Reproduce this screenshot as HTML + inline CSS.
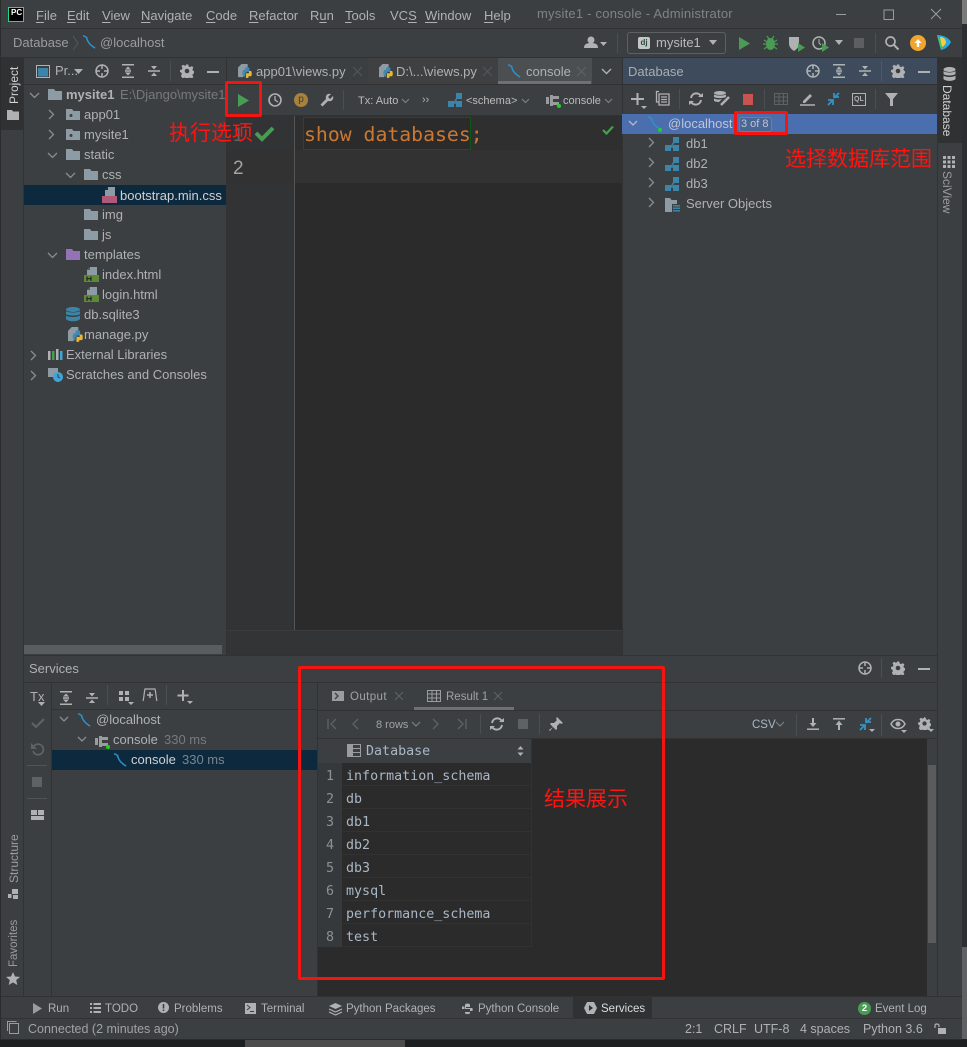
<!DOCTYPE html>
<html><head><meta charset="utf-8"><style>
html,body{margin:0;padding:0;background:#1f2022}
body{width:967px;height:1047px;position:relative;overflow:hidden;font-family:"Liberation Sans","Noto Sans CJK SC",sans-serif;font-size:13px;color:#afb1b3}
div{position:absolute}
.t{white-space:nowrap;line-height:20px;height:20px}
.m{font-family:"DejaVu Sans Mono","Liberation Mono",monospace;font-size:13.33px;color:#a9b7c6;line-height:23px;height:23px;white-space:nowrap}
.n{font-family:"DejaVu Sans Mono","Liberation Mono",monospace;font-size:13.33px;color:#8d9094;line-height:27px;width:24px;text-align:center;left:318px;height:23px}
.r{left:342px;width:190px;height:22px;background:#2b2b2b;border-bottom:1px solid #323232;box-sizing:content-box}
.red{color:#ff1410;font-size:21px;white-space:nowrap;line-height:24px;font-family:"Noto Sans CJK SC",sans-serif;font-weight:400}
.box{border:3px solid #f5140f;box-sizing:border-box;border-radius:2px}
svg{position:absolute;overflow:visible}
u{text-decoration-thickness:1px;text-underline-offset:2px}
.v{transform-origin:0 0;transform:rotate(-90deg);white-space:nowrap;line-height:14px;font-size:12px}
</style></head><body>
<svg width="0" height="0" style="position:absolute">
<defs>
<symbol id="folder" viewBox="0 0 14 12"><path d="M0 1h6l1.500 2H14v9H0z" fill="#8d9ba5"/></symbol>
<symbol id="mod" viewBox="0 0 14 12"><path d="M0 1h6l1.500 2H14v9H0z" fill="#8d9ba5"/><circle cx="5" cy="7.500" r="1.500" fill="#3c3f41"/></symbol>
<symbol id="mysql" viewBox="0 0 16 16"><path d="M1 1c3 0 4 2 5 5 1 3 3 4 5 6l3 2M5 2c0 3 1 5 3 7" fill="none" stroke="#2f93c9" stroke-width="1.500"/></symbol>
<symbol id="dbg" viewBox="0 0 14 14"><path d="M0 8h6v6H0zM8 0h6v6H8zM8 8h6v6H8z" fill="#3d85a8"/><path d="M6 10h2M6 10l3-5" stroke="#3d85a8" stroke-width="1.500"/></symbol>
<symbol id="gear" viewBox="0 0 14 14"><path d="M7 .5l1.200 0 .5 2 1.400.6 1.800-1 1.500 1.500-1 1.800.6 1.400 1.900.5v2l-1.900.5-.6 1.400 1 1.800-1.500 1.500-1.800-1-1.400.6-.5 1.900h-2l-.5-1.900-1.400-.6-1.800 1L.9 11.800l1-1.800-.6-1.400L0 8V6l1.900-.5.6-1.400-1-1.800L3 .8l1.800 1 1.400-.6.500-1.700z" fill="#afb1b3"/><circle cx="7" cy="7" r="2.300" fill="#3c3f41"/></symbol>
<symbol id="target" viewBox="0 0 14 14"><circle cx="7" cy="7" r="6" fill="none" stroke="#afb1b3" stroke-width="1.500"/><path d="M7 1v4M7 9v4M1 7h4M9 7h4" stroke="#afb1b3" stroke-width="1.500"/></symbol>
<symbol id="exp" viewBox="0 0 14 14"><path d="M1 .8h12M1 13.200h12M4 7h6" stroke="#afb1b3" stroke-width="1.500"/><path d="M7 2.500L4 5.500h6zM7 11.500L4 8.500h6z" fill="#afb1b3"/></symbol>
<symbol id="col" viewBox="0 0 14 14"><path d="M1 7h12" stroke="#afb1b3" stroke-width="1.500"/><path d="M7 5.500L4 2h6zM7 8.500L4 12h6z" fill="#afb1b3"/></symbol>
<symbol id="html" viewBox="0 0 15 16"><path d="M6 0h7v8H3V3z" fill="#8d9ba5"/><path d="M3 3h3V0z" fill="#55585a"/><path d="M0 8h15v7H0z" fill="#5c8a36"/><path d="M3 9.500v4.500M7 9.500v4.500M3 11.700h4" stroke="#222" stroke-width="1.200"/></symbol>
<symbol id="py" viewBox="0 0 16 16"><path d="M4 0h7v7H6v8H0V4z" fill="#8d9ba5"/><path d="M5 10c0-2 1-3 3-3V5c0-1 1-1.500 2.500-1.500S13 4 13 5v4H9v1h1v.5H8v4c-2 0-3-2-3-4.500z" fill="#3d8bb5"/><path d="M9 10.500h3.500V8H15c1 1 1 5 0 6h-3v1.500c-1 .7-3 .7-3 0z" fill="#e8b62f"/></symbol>
<symbol id="refresh" viewBox="0 0 14 14"><path d="M2 6c1-6 9-6 10-1M12 8c-1 6-9 6-10 1" fill="none" stroke="#afb1b3" stroke-width="2"/><path d="M9 5h5V1zM5 9H0v4z" fill="#afb1b3"/></symbol>
</defs></svg>

<!-- base -->
<div style="left:0;top:0;width:962px;height:1039px;background:#3c3f41"></div>
<div style="left:962px;top:0;width:5px;height:1039px;background:#2c2e31"></div>
<div style="left:962px;top:0;width:5px;height:24px;background:#7a7a7a"></div>
<div style="left:962px;top:947px;width:5px;height:92px;background:#5f6163"></div>
<div style="left:0;top:1039px;width:967px;height:8px;background:#1e1f21"></div>
<div style="left:245px;top:1039px;width:160px;height:8px;background:#4c4c4c"></div>
<div style="left:0;top:0;width:1px;height:1039px;background:#2b2b2b"></div>

<!-- title bar -->
<div style="left:0;top:28px;width:962px;height:1px;background:#323232"></div>
<div style="left:8px;top:7px;width:16px;height:15px;background:#000;border:1px solid #21d789;box-sizing:border-box;color:#fff;font-size:8px;font-weight:bold;line-height:10px;padding-left:2px">PC</div>
<div class="t" style="left:36px;top:6px;word-spacing:0"><u>F</u>ile</div>
<div class="t" style="left:67px;top:6px"><u>E</u>dit</div>
<div class="t" style="left:102px;top:6px"><u>V</u>iew</div>
<div class="t" style="left:141px;top:6px"><u>N</u>avigate</div>
<div class="t" style="left:206px;top:6px"><u>C</u>ode</div>
<div class="t" style="left:249px;top:6px"><u>R</u>efactor</div>
<div class="t" style="left:310px;top:6px">R<u>u</u>n</div>
<div class="t" style="left:345px;top:6px"><u>T</u>ools</div>
<div class="t" style="left:390px;top:6px">VC<u>S</u></div>
<div class="t" style="left:425px;top:6px"><u>W</u>indow</div>
<div class="t" style="left:484px;top:6px"><u>H</u>elp</div>
<div class="t" style="left:537px;top:4px;color:#808385;letter-spacing:.22px">mysite1 - console - Administrator</div>
<svg style="left:835px;top:8px" width="120" height="14"><path d="M1 6.500h10M49 2h9.500v9.500H49zM96 1l10 10M106 1L96 11" fill="none" stroke="#9a9c9e" stroke-width="1"/></svg>

<!-- nav bar -->
<div style="left:0;top:57px;width:962px;height:1px;background:#323232"></div>
<div class="t" style="left:13px;top:33px;color:#9a9c9e">Database</div>
<svg style="left:72px;top:36px" width="8" height="14"><path d="M1 0l5 7-5 7" fill="none" stroke="#55585a"/></svg>
<svg style="left:82px;top:35px" width="15" height="15"><use href="#mysql"/></svg>
<div class="t" style="left:100px;top:33px;color:#9a9c9e">@localhost</div>
<svg style="left:584px;top:36px" width="26" height="14"><circle cx="7" cy="4" r="3.500" fill="#afb1b3"/><path d="M0 12c0-4 3-5 7-5s7 1 7 5z" fill="#afb1b3"/><path d="M16 6h7l-3.500 4z" fill="#afb1b3"/></svg>
<div style="left:617px;top:33px;width:1px;height:20px;background:#4c4f51"></div>
<div style="left:627px;top:32px;width:99px;height:22px;border:1px solid #5e6060;border-radius:3px;box-sizing:border-box"></div>
<div style="left:638px;top:37px;width:12px;height:12px;background:#c4c6c8;border-radius:2px;color:#2b4a3a;font-size:8px;line-height:11px;text-align:center;font-weight:bold">dj</div>
<div class="t" style="left:656px;top:33px;color:#bbb">mysite1</div>
<svg style="left:708px;top:39px" width="10" height="8"><path d="M1 1h8L5 6z" fill="#afb1b3"/></svg>
<svg style="left:739px;top:37px" width="12" height="13"><path d="M0 0l11 6.500L0 13z" fill="#499c54"/></svg>
<svg style="left:763px;top:35px" width="15" height="16"><ellipse cx="7.500" cy="9" rx="4.500" ry="6" fill="#499c54"/><path d="M1 5l3 2M14 5l-3 2M0 9h3M15 9h-3M1 14l3-2M14 14l-3-2M4 1l2 3M11 1L9 4" stroke="#499c54" stroke-width="1.300"/></svg>
<svg style="left:788px;top:36px" width="18" height="16"><path d="M1 1h10v6c0 4-2 6-5 8-3-2-5-4-5-8z" fill="#afb1b3"/><path d="M10 7l7 4.500-7 4.500z" fill="#499c54"/></svg>
<svg style="left:812px;top:36px" width="18" height="16"><circle cx="7" cy="7" r="6" fill="none" stroke="#afb1b3" stroke-width="1.500"/><path d="M7 3v4l2 2" fill="none" stroke="#afb1b3"/><path d="M10 7l7 4.500-7 4.500z" fill="#499c54"/></svg>
<svg style="left:834px;top:40px" width="10" height="6"><path d="M1 0h8L5 5z" fill="#afb1b3"/></svg>
<div style="left:854px;top:38px;width:10px;height:10px;background:#5c5e60"></div>
<div style="left:875px;top:33px;width:1px;height:20px;background:#4c4f51"></div>
<svg style="left:885px;top:36px" width="14" height="14"><circle cx="5.500" cy="5.500" r="4.500" fill="none" stroke="#afb1b3" stroke-width="1.700"/><path d="M9 9l4.500 4.500" stroke="#afb1b3" stroke-width="2"/></svg>
<svg style="left:910px;top:35px" width="16" height="16"><circle cx="8" cy="8" r="8" fill="#f2a52e"/><path d="M8 4L4.500 8h2.300v4h2.400V8h2.300z" fill="#fff"/></svg>
<svg style="left:937px;top:35px" width="15" height="15"><path d="M0 0c6 0 12 3 14 7-2 4-5 7-10 8z" fill="#2aa7e0"/><path d="M0 0l4 15c1-5 1-9-4-15z" fill="#4fc26b"/><path d="M3 2c4 0 6 3 6 5s-2 4-4 5z" fill="#f2d13a"/></svg>

<!-- left strip -->
<div style="left:23px;top:58px;width:1px;height:938px;background:#323232"></div>
<div style="left:1px;top:58px;width:22px;height:72px;background:#2f3133"></div>
<div class="v" style="left:7px;top:104px;color:#d0d2d4">Project</div>
<svg style="left:7px;top:110px" width="12" height="10"><path d="M0 0h5l1 1.500h6V10H0z" fill="#afb1b3"/></svg>
<div class="v" style="left:7px;top:883px;color:#9a9c9e">Structure</div>
<svg style="left:8px;top:889px" width="10" height="10"><path d="M4 0h6v5H4zM0 5h3.500v4H0zM5 6h5v4H5z" fill="#afb1b3"/></svg>
<div class="v" style="left:7px;top:967px;color:#9a9c9e;font-size:11.500px">Favorites</div>
<svg style="left:6px;top:972px" width="14" height="13"><path d="M7 0l2 4.500 5 .4-3.800 3.200L11.300 13 7 10.400 2.700 13l1.100-4.900L0 4.900l5-.4z" fill="#afb1b3"/></svg>

<!-- project panel -->
<div style="left:24px;top:58px;width:203px;height:597px;background:#3c3f41"></div>
<div style="left:24px;top:84px;width:203px;height:1px;background:#323232"></div>
<svg style="left:36px;top:65px" width="14" height="13"><rect x=".5" y=".5" width="13" height="12" fill="none" stroke="#afb1b3"/><rect x="2" y="3" width="10" height="8.500" fill="#3d85a8"/></svg>
<div class="t" style="left:55px;top:61px">Pr...</div>
<svg style="left:74px;top:69px" width="9" height="6"><path d="M0 0h9L4.500 5z" fill="#afb1b3"/></svg>
<svg style="left:95px;top:64px" width="14" height="14"><use href="#target"/></svg>
<svg style="left:121px;top:64px" width="14" height="14"><use href="#exp"/></svg>
<svg style="left:147px;top:64px" width="14" height="14"><use href="#col"/></svg>
<div style="left:170px;top:61px;width:1px;height:20px;background:#4c4f51"></div>
<svg style="left:180px;top:64px" width="14" height="14"><use href="#gear"/></svg>
<div style="left:207px;top:71px;width:12px;height:2px;background:#afb1b3"></div>

<svg style="left:30px;top:85px" width="50" height="300" fill="none" stroke="#8a8d8f" stroke-width="1.300">
<path d="M0 8l4.500 4.500L9 8"/><path d="M19 25l4.500 4.500-4.500 4.500M19 45l4.500 4.500-4.500 4.500"/><path d="M18 68l4.500 4.500 4.500-4.500M36 88l4.500 4.500 4.500-4.500M18 168l4.500 4.500 4.500-4.500"/><path d="M1 266l4.500 4.500-4.500 4.500M1 286l4.500 4.500-4.500 4.500"/></svg>
<svg style="left:48px;top:88px" width="14" height="12"><use href="#folder"/></svg>
<div class="t" style="left:66px;top:85px;font-weight:bold">mysite1</div>
<div class="t" style="left:120px;top:85px;width:105px;overflow:hidden;color:#787a7c">E:\Django\mysite1</div>
<svg style="left:66px;top:108px" width="14" height="12"><use href="#mod"/></svg>
<div class="t" style="left:84px;top:105px">app01</div>
<svg style="left:66px;top:128px" width="14" height="12"><use href="#mod"/></svg>
<div class="t" style="left:84px;top:125px">mysite1</div>
<svg style="left:66px;top:148px" width="14" height="12"><use href="#folder"/></svg>
<div class="t" style="left:84px;top:145px">static</div>
<svg style="left:84px;top:168px" width="14" height="12"><use href="#folder"/></svg>
<div class="t" style="left:102px;top:165px">css</div>
<div style="left:24px;top:185px;width:202px;height:20px;background:#0d293e"></div>
<svg style="left:102px;top:187px" width="15" height="16"><path d="M6 0h7v9H3V3z" fill="#8d9ba5"/><path d="M3 3h3V0z" fill="#0d293e"/><rect y="9" width="15" height="7" fill="#b05a78"/></svg>
<div class="t" style="left:120px;top:186px;color:#cfd1d3">bootstrap.min.css</div>
<svg style="left:84px;top:208px" width="14" height="12"><use href="#folder"/></svg>
<div class="t" style="left:102px;top:205px">img</div>
<svg style="left:84px;top:228px" width="14" height="12"><use href="#folder"/></svg>
<div class="t" style="left:102px;top:225px">js</div>
<svg style="left:66px;top:248px" width="14" height="12"><path d="M0 1h6l1.500 2H14v9H0z" fill="#9373b5"/></svg>
<div class="t" style="left:84px;top:245px">templates</div>
<svg style="left:84px;top:267px" width="15" height="16"><use href="#html"/></svg>
<div class="t" style="left:102px;top:265px">index.html</div>
<svg style="left:84px;top:287px" width="15" height="16"><use href="#html"/></svg>
<div class="t" style="left:102px;top:285px">login.html</div>
<svg style="left:66px;top:307px" width="14" height="15"><ellipse cx="7" cy="2.500" rx="7" ry="2.500" fill="#3d85a8"/><path d="M0 4c2 2 12 2 14 0v3c-2 2-12 2-14 0zM0 8.500c2 2 12 2 14 0V12c-2 3-12 3-14 0z" fill="#3d85a8"/></svg>
<div class="t" style="left:84px;top:305px">db.sqlite3</div>
<svg style="left:68px;top:327px" width="15" height="15"><use href="#py"/></svg>
<div class="t" style="left:84px;top:325px">manage.py</div>
<svg style="left:48px;top:349px" width="15" height="11"><path d="M0 2h2.500v9H0z" fill="#afb1b3"/><path d="M4 2h2.500v9H4z" fill="#499c54"/><path d="M8 0h2.500v11H8z" fill="#afb1b3"/><path d="M12 2h2.500v9H12z" fill="#3fa5d8"/></svg>
<div class="t" style="left:66px;top:345px">External Libraries</div>
<svg style="left:48px;top:368px" width="15" height="14"><path d="M0 0h10v9H0z" fill="#8d9ba5"/><circle cx="10" cy="9" r="5" fill="#3fa5d8"/><path d="M10 6v3l2 1" fill="none" stroke="#3c3f41"/></svg>
<div class="t" style="left:66px;top:365px">Scratches and Consoles</div>
<div style="left:24px;top:645px;width:198px;height:9px;background:#5a5d5f"></div>
<div style="left:226px;top:58px;width:1px;height:597px;background:#323232"></div>

<!-- editor tabs -->
<div style="left:227px;top:58px;width:395px;height:26px;background:#3c3f41"></div>
<div style="left:227px;top:84px;width:395px;height:1px;background:#323232"></div>
<div style="left:368px;top:58px;width:130px;height:26px;background:#3e4042"></div>
<div style="left:498px;top:58px;width:94px;height:26px;background:#4b4f52"></div>
<div style="left:498px;top:81px;width:93px;height:3px;background:#6e7173"></div>
<svg style="left:238px;top:64px" width="14" height="14"><use href="#py"/></svg>
<div class="t" style="left:256px;top:62px;color:#afb1b3">app01\views.py</div>
<svg style="left:353px;top:67px" width="9" height="9"><path d="M0 0l9 9M9 0L0 9" stroke="#55585a"/></svg>
<svg style="left:379px;top:64px" width="14" height="14"><use href="#py"/></svg>
<div class="t" style="left:396px;top:62px;color:#afb1b3">D:\...\views.py</div>
<svg style="left:483px;top:67px" width="9" height="9"><path d="M0 0l9 9M9 0L0 9" stroke="#55585a"/></svg>
<svg style="left:507px;top:64px" width="15" height="15"><use href="#mysql"/></svg>
<div class="t" style="left:526px;top:62px;color:#afb1b3">console</div>
<svg style="left:577px;top:67px" width="9" height="9"><path d="M0 0l9 9M9 0L0 9" stroke="#606366"/></svg>
<svg style="left:601px;top:68px" width="11" height="7"><path d="M1 1l4.500 4.500L10 1" fill="none" stroke="#afb1b3" stroke-width="1.400"/></svg>

<!-- editor toolbar -->
<div style="left:227px;top:115px;width:395px;height:1px;background:#323232"></div>
<svg style="left:238px;top:94px" width="12" height="13"><path d="M0 0l11 6.500L0 13z" fill="#499c54"/></svg>
<svg style="left:268px;top:93px" width="14" height="14"><circle cx="7" cy="7" r="6" fill="none" stroke="#afb1b3" stroke-width="1.600"/><path d="M7 3v4l3 2" fill="none" stroke="#afb1b3" stroke-width="1.300"/></svg>
<div style="left:294px;top:93px;width:14px;height:14px;border-radius:7px;background:#a7823c;color:#3c3f41;font-size:10px;line-height:13px;text-align:center">p</div>
<svg style="left:320px;top:93px" width="14" height="14"><path d="M13 3l-3 3-2-2 3-3C8 0 5 2 6 6L.5 11.500 2.500 13.500 8 8c4 1 6-2 5-5z" fill="#afb1b3"/></svg>
<div style="left:343px;top:90px;width:1px;height:20px;background:#4c4f51"></div>
<div class="t" style="left:358px;top:91px;font-size:11px;color:#bbb">Tx: Auto</div>
<svg style="left:401px;top:98px" width="9" height="6"><path d="M1 1l3.500 3.500L8 1" fill="none" stroke="#7b7e80" stroke-width="1.200"/></svg>
<div class="t" style="left:422px;top:90px;font-size:11px">››</div>
<svg style="left:448px;top:93px" width="14" height="14"><use href="#dbg"/></svg>
<div class="t" style="left:466px;top:91px;font-size:11px;color:#bbb">&lt;schema&gt;</div>
<svg style="left:521px;top:98px" width="9" height="6"><path d="M1 1l3.500 3.500L8 1" fill="none" stroke="#7b7e80" stroke-width="1.200"/></svg>
<svg style="left:546px;top:94px" width="15" height="15"><path d="M0 3h3v7H0zM4 1h3v11H4zM7 2h6v3H7zM7 8h6v3H7z" fill="#9a9c9e"/><circle cx="13" cy="12" r="2" fill="#1ed41e"/></svg>
<div class="t" style="left:563px;top:91px;font-size:11px;color:#bbb">console</div>
<svg style="left:604px;top:98px" width="9" height="6"><path d="M1 1l3.500 3.500L8 1" fill="none" stroke="#7b7e80" stroke-width="1.200"/></svg>

<!-- editor area -->
<div style="left:227px;top:116px;width:395px;height:514px;background:#2b2b2b"></div>
<div style="left:227px;top:116px;width:68px;height:514px;background:#313335"></div>
<div style="left:295px;top:116px;width:327px;height:34px;background:#2f2f2f"></div>
<div style="left:227px;top:150px;width:395px;height:33px;background:#323232"></div>
<div style="left:294px;top:116px;width:1px;height:514px;background:#555"></div>
<div style="left:227px;top:630px;width:395px;height:25px;background:#323436"></div>
<div style="left:227px;top:630px;width:395px;height:1px;background:#3b3d3e"></div>
<div style="left:303px;top:117px;width:168px;height:33px;border:1px solid #0e5a12;box-sizing:border-box;background:#2b2b2b"></div>
<div class="m" style="left:304px;top:123px;font-size:19.8px;color:#cc7832;line-height:24px;height:24px">show databases;</div>
<div class="t" style="left:233px;top:124px;font-size:19px;color:#606366;line-height:24px;height:24px">1</div>
<div class="t" style="left:233px;top:157px;font-size:19px;color:#a4a3a3;line-height:24px;height:24px">2</div>
<svg style="left:254px;top:125px" width="21" height="17"><path d="M2 8l6 6L19 3" fill="none" stroke="#499c54" stroke-width="4"/></svg>
<svg style="left:602px;top:125px" width="12" height="10"><path d="M1 5l3.500 3.500L11 1.500" fill="none" stroke="#499c54" stroke-width="2.200"/></svg>

<!-- database panel -->
<div style="left:622px;top:58px;width:1px;height:597px;background:#323232"></div>
<div style="left:623px;top:58px;width:314px;height:26px;background:#3d4b5c"></div>
<div style="left:623px;top:84px;width:314px;height:1px;background:#323232"></div>
<div class="t" style="left:628px;top:62px;color:#a8adb2">Database</div>
<svg style="left:806px;top:64px" width="14" height="14"><use href="#target"/></svg>
<svg style="left:832px;top:64px" width="14" height="14"><use href="#exp"/></svg>
<svg style="left:858px;top:64px" width="14" height="14"><use href="#col"/></svg>
<div style="left:881px;top:61px;width:1px;height:20px;background:#4c5966"></div>
<svg style="left:891px;top:64px" width="14" height="14"><use href="#gear"/></svg>
<div style="left:918px;top:71px;width:12px;height:2px;background:#afb1b3"></div>

<svg style="left:631px;top:92px" width="16" height="18"><path d="M6.500 1v12M0 7h13" stroke="#afb1b3" stroke-width="2"/><path d="M10 14h6l-3 3z" fill="#afb1b3"/></svg>
<svg style="left:656px;top:91px" width="14" height="15"><path d="M3 .5H.5V11H3M3 3h10v11H3z" fill="none" stroke="#afb1b3" stroke-width="1.300"/><path d="M5 6h6M5 8.500h6M5 11h6" stroke="#afb1b3" stroke-width="1.300"/></svg>
<div style="left:679px;top:89px;width:1px;height:20px;background:#4c4f51"></div>
<svg style="left:689px;top:92px" width="14" height="14"><use href="#refresh"/></svg>
<svg style="left:714px;top:91px" width="17" height="17"><ellipse cx="6" cy="2" rx="6" ry="2" fill="#afb1b3"/><path d="M0 3.500c3 1.500 9 1.500 12 0V6c-3 1.500-9 1.500-12 0zM0 7.500c3 1.500 6 1 8 .5L5 11c-3 0-5-1-5-1z" fill="#afb1b3"/><path d="M15 6l-8 8" stroke="#afb1b3" stroke-width="2.500"/></svg>
<div style="left:743px;top:94px;width:10px;height:11px;background:#c75450"></div>
<div style="left:764px;top:89px;width:1px;height:20px;background:#4c4f51"></div>
<svg style="left:774px;top:93px" width="14" height="12"><path d="M.5.500h13v11H.5zM.5 4h13M.5 8h13M5 .5v11M9.500.5v11" fill="none" stroke="#5f6264"/></svg>
<svg style="left:800px;top:92px" width="15" height="14"><path d="M3 9l7-7 2 2-7 7H3z" fill="#afb1b3"/><path d="M0 13h15" stroke="#afb1b3" stroke-width="1.500"/></svg>
<svg style="left:826px;top:92px" width="15" height="14"><path d="M8 6l5-5M13 5H8V1" fill="none" stroke="#3592c4" stroke-width="1.800"/><path d="M7 8l-5 5M2 8h5v5" fill="none" stroke="#3592c4" stroke-width="1.800"/></svg>
<svg style="left:852px;top:93px" width="14" height="13"><rect x=".5" y=".5" width="13" height="12" fill="none" stroke="#afb1b3"/></svg>
<div class="t" style="left:854px;top:90px;font-size:7px;color:#afb1b3;font-weight:bold">QL</div>
<div style="left:875px;top:89px;width:1px;height:20px;background:#4c4f51"></div>
<svg style="left:885px;top:93px" width="14" height="13"><path d="M0 0h13L8 6v7H5V6z" fill="#afb1b3"/></svg>

<div style="left:622px;top:114px;width:315px;height:20px;background:#4b6eaf"></div>
<svg style="left:628px;top:120px" width="10" height="7"><path d="M1 1l4 4 4-4" fill="none" stroke="#bbb" stroke-width="1.300"/></svg>
<svg style="left:647px;top:116px" width="15" height="15"><use href="#mysql"/><circle cx="13" cy="14" r="2" fill="#1ed41e"/></svg>
<div class="t" style="left:668px;top:114px;color:#bfc5d2">@localhost</div>
<div style="left:739px;top:117px;width:33px;height:15px;border:1px solid #6f7f99;border-radius:3px;box-sizing:border-box;background:#4a6694"></div>
<div class="t" style="left:741px;top:114px;color:#bfc5d2;font-size:11px">3 of 8</div>
<div class="box" style="left:734px;top:111px;width:54px;height:24px"></div>
<svg style="left:648px;top:137px" width="8" height="70" fill="none" stroke="#8a8d8f" stroke-width="1.300"><path d="M1 1l4.500 4.500L1 10M1 21l4.500 4.500L1 30M1 41l4.500 4.500L1 50M1 61l4.500 4.500L1 70"/></svg>
<svg style="left:665px;top:137px" width="14" height="14"><use href="#dbg"/></svg>
<div class="t" style="left:686px;top:134px">db1</div>
<svg style="left:665px;top:157px" width="14" height="14"><use href="#dbg"/></svg>
<div class="t" style="left:686px;top:154px">db2</div>
<svg style="left:665px;top:177px" width="14" height="14"><use href="#dbg"/></svg>
<div class="t" style="left:686px;top:174px">db3</div>
<svg style="left:665px;top:198px" width="15" height="14"><path d="M0 0h5l1.500 2H12v4H7v8H0z" fill="#8d9ba5"/><path d="M8 7h7v1.500H8zM8 9.500h7V11H8zM8 12h7v1.500H8z" fill="#3d85a8"/></svg>
<div class="t" style="left:686px;top:194px">Server Objects</div>

<!-- right strip -->
<div style="left:937px;top:58px;width:1px;height:938px;background:#323232"></div>
<div style="left:938px;top:58px;width:24px;height:85px;background:#2f3133"></div>
<svg style="left:943px;top:67px" width="13" height="14"><ellipse cx="6.500" cy="2.500" rx="6" ry="2.500" fill="#afb1b3"/><path d="M.5 4c2 2 10 2 12 0v3c-2 2-10 2-12 0zM.5 8.500c2 2 10 2 12 0V12c-2 2.500-10 2.500-12 0z" fill="#afb1b3"/></svg>
<div class="v" style="left:954px;top:85px;transform:rotate(90deg);color:#d0d2d4">Database</div>
<svg style="left:943px;top:156px" width="12" height="12"><path d="M0 0h3v3H0zM4.500 0h3v3h-3zM9 0h3v3H9zM0 4.500h3v3H0zM4.500 4.500h3v3h-3zM9 4.500h3v3H9zM0 9h3v3H0zM4.500 9h3v3h-3zM9 9h3v3H9z" fill="#afb1b3"/></svg>
<div class="v" style="left:954px;top:171px;transform:rotate(90deg);color:#9a9c9e">SciView</div>

<!-- services header -->
<div style="left:24px;top:655px;width:913px;height:341px;background:#3c3f41"></div>
<div style="left:24px;top:655px;width:913px;height:1px;background:#323232"></div>
<div style="left:24px;top:682px;width:913px;height:1px;background:#323232"></div>
<div class="t" style="left:29px;top:659px">Services</div>
<svg style="left:858px;top:661px" width="14" height="14"><use href="#target"/></svg>
<div style="left:881px;top:658px;width:1px;height:20px;background:#4c4f51"></div>
<svg style="left:891px;top:661px" width="14" height="14"><use href="#gear"/></svg>
<div style="left:918px;top:668px;width:12px;height:2px;background:#afb1b3"></div>

<!-- services left toolbar -->
<div style="left:51px;top:683px;width:1px;height:313px;background:#323232"></div>
<div class="t" style="left:30px;top:687px;color:#afb1b3">Tx</div>
<svg style="left:38px;top:702px" width="8" height="5"><path d="M0 0h7L3.500 4z" fill="#afb1b3"/></svg>
<svg style="left:31px;top:717px" width="14" height="12"><path d="M1 6l4 4 8-8" fill="none" stroke="#5f6264" stroke-width="2.200"/></svg>
<svg style="left:31px;top:743px" width="13" height="13"><path d="M3 3a5.300 5.300 0 1 1-1 5" fill="none" stroke="#5f6264" stroke-width="1.800"/><path d="M0 0v6h6z" fill="#5f6264"/></svg>
<div style="left:27px;top:765px;width:20px;height:1px;background:#515456"></div>
<div style="left:32px;top:777px;width:10px;height:10px;background:#5f6264"></div>
<div style="left:27px;top:798px;width:20px;height:1px;background:#515456"></div>
<svg style="left:31px;top:810px" width="13" height="10"><path d="M0 0h6v5H0zM7 0h6v5H7zM0 6h13v4H0z" fill="#afb1b3"/></svg>

<!-- services tree -->
<svg style="left:59px;top:691px" width="14" height="14"><use href="#exp"/></svg>
<svg style="left:85px;top:691px" width="14" height="14"><use href="#col"/></svg>
<div style="left:107px;top:685px;width:1px;height:20px;background:#4c4f51"></div>
<svg style="left:118px;top:690px" width="16" height="15"><path d="M1 1h4v4H1zM7 1h4v4H7zM1 7h4v4H1zM7 7h4v4H7z" fill="#afb1b3"/><path d="M10 12h6l-3 3z" fill="#afb1b3"/></svg>
<svg style="left:142px;top:688px" width="16" height="14"><path d="M1 13c1-3 1-8 2-12h10c1 4 1 9 2 12" fill="none" stroke="#afb1b3" stroke-width="1.200"/><path d="M8 4v6M5 7h6" stroke="#afb1b3" stroke-width="1.500"/></svg>
<div style="left:166px;top:685px;width:1px;height:20px;background:#4c4f51"></div>
<svg style="left:177px;top:689px" width="16" height="16"><path d="M6 1v11M.5 6.500h11" stroke="#afb1b3" stroke-width="2"/><path d="M10 12h6l-3 3z" fill="#afb1b3"/></svg>
<div style="left:52px;top:709px;width:266px;height:1px;background:#323232"></div>
<svg style="left:59px;top:716px" width="10" height="7"><path d="M1 1l4 4 4-4" fill="none" stroke="#8a8d8f" stroke-width="1.300"/></svg>
<svg style="left:77px;top:713px" width="15" height="15"><use href="#mysql"/></svg>
<div class="t" style="left:96px;top:710px">@localhost</div>
<svg style="left:77px;top:736px" width="10" height="7"><path d="M1 1l4 4 4-4" fill="none" stroke="#8a8d8f" stroke-width="1.300"/></svg>
<svg style="left:95px;top:735px" width="15" height="15"><path d="M0 3h3v7H0zM4 1h3v11H4zM7 2h6v3H7zM7 8h6v3H7z" fill="#9a9c9e"/><circle cx="13" cy="12" r="2" fill="#1ed41e"/></svg>
<div class="t" style="left:113px;top:730px">console</div>
<div class="t" style="left:164px;top:730px;color:#787a7c">330 ms</div>
<div style="left:52px;top:750px;width:265px;height:20px;background:#0d293e"></div>
<svg style="left:113px;top:753px" width="15" height="15"><use href="#mysql"/></svg>
<div class="t" style="left:131px;top:750px;color:#cfd1d3">console</div>
<div class="t" style="left:182px;top:750px;color:#7a8590">330 ms</div>
<div style="left:317px;top:683px;width:1px;height:313px;background:#323232"></div>

<!-- result tabs -->
<div style="left:318px;top:710px;width:619px;height:1px;background:#323232"></div>
<div style="left:414px;top:707px;width:100px;height:3px;background:#6e7173"></div>
<svg style="left:332px;top:691px" width="12" height="10"><path d="M0 0h12v10H0z" fill="#9a9c9e"/><path d="M3 2l3 3-3 3" fill="none" stroke="#3c3f41" stroke-width="1.300"/></svg>
<div class="t" style="left:350px;top:687px;font-size:11.500px;color:#a0a2a4;letter-spacing:.4px">Output</div>
<svg style="left:395px;top:692px" width="8" height="8"><path d="M0 0l8 8M8 0L0 8" stroke="#5f6264"/></svg>
<svg style="left:427px;top:690px" width="14" height="12"><path d="M.5.500h13v11H.5zM.5 4h13M.5 8h13M5 .5v11M9.500.5v11" fill="none" stroke="#9a9c9e"/></svg>
<div class="t" style="left:446px;top:687px;font-size:11.500px;color:#a0a2a4">Result 1</div>
<svg style="left:494px;top:692px" width="8" height="8"><path d="M0 0l8 8M8 0L0 8" stroke="#5f6264"/></svg>

<!-- result toolbar -->
<svg style="left:327px;top:718px" width="145" height="12" fill="none" stroke="#5f6264" stroke-width="1.300"><path d="M1 1v10M9 1L4 6l5 5M31 1l-5 5 5 5M106 1l5 5-5 5M131 1l5 5-5 5M139 1v10"/></svg>
<div class="t" style="left:376px;top:715px;font-size:11px;color:#a0a2a4">8 rows</div>
<svg style="left:411px;top:721px" width="10" height="6"><path d="M1 1l4 4 4-4" fill="none" stroke="#7b7e80" stroke-width="1.200"/></svg>
<div style="left:480px;top:714px;width:1px;height:20px;background:#4c4f51"></div>
<svg style="left:490px;top:717px" width="14" height="14"><use href="#refresh"/></svg>
<div style="left:518px;top:719px;width:10px;height:10px;background:#5f6264"></div>
<div style="left:539px;top:714px;width:1px;height:20px;background:#4c4f51"></div>
<svg style="left:549px;top:717px" width="14" height="14"><path d="M8 0l6 6-2 1-1-1-3 3 0 3-1 1-3-3-3 4-1-1 4-3-3-3 1-1h3l3-3-1-1z" fill="#afb1b3"/></svg>
<div class="t" style="left:752px;top:715px;font-size:11.500px;color:#a9b7c6">CSV</div>
<svg style="left:775px;top:721px" width="10" height="6"><path d="M1 1l4 4 4-4" fill="none" stroke="#7b7e80" stroke-width="1.200"/></svg>
<div style="left:796px;top:714px;width:1px;height:22px;background:#4c4f51"></div>
<svg style="left:807px;top:718px" width="12" height="12"><path d="M0 11.200h12" stroke="#afb1b3" stroke-width="1.500"/><path d="M6 0v5" stroke="#afb1b3" stroke-width="2"/><path d="M6 9L2.500 5h7z" fill="#afb1b3"/></svg>
<svg style="left:833px;top:718px" width="12" height="12"><path d="M0 .8h12" stroke="#afb1b3" stroke-width="1.500"/><path d="M6 6v6" stroke="#afb1b3" stroke-width="2"/><path d="M6 2.500L2.500 7h7z" fill="#afb1b3"/></svg>
<svg style="left:858px;top:717px" width="18" height="16"><path d="M8 6l5-5M13 5H8V1" fill="none" stroke="#3592c4" stroke-width="1.800"/><path d="M7 8l-5 5M2 8h5v5" fill="none" stroke="#3592c4" stroke-width="1.800"/><path d="M11 12h6l-3 3z" fill="#afb1b3"/></svg>
<div style="left:881px;top:714px;width:1px;height:22px;background:#4c4f51"></div>
<svg style="left:891px;top:718px" width="16" height="15"><path d="M0 6c3-6 11-6 14 0-3 6-11 6-14 0z" fill="none" stroke="#afb1b3" stroke-width="1.500"/><circle cx="7" cy="6" r="2.500" fill="#afb1b3"/><path d="M10 12h6l-3 3z" fill="#afb1b3"/></svg>
<svg style="left:918px;top:717px" width="16" height="16"><use href="#gear" width="13" height="13"/><path d="M10 12h6l-3 3z" fill="#afb1b3"/></svg>

<!-- table -->
<div style="left:318px;top:738px;width:619px;height:1px;background:#323232"></div>
<div style="left:318px;top:739px;width:609px;height:257px;background:#2b2b2b"></div>
<div style="left:927px;top:739px;width:10px;height:257px;background:#3c3f41"></div>
<div style="left:928px;top:765px;width:8px;height:178px;background:#595b5d"></div>
<div style="left:318px;top:739px;width:214px;height:24px;background:#3c3f41"></div>
<svg style="left:347px;top:744px" width="14" height="13"><path d="M0 0h5v13H0z" fill="#9a9c9e"/><path d="M5.500.5h8v12h-8zM6 4.500h8M6 8.500h8" fill="none" stroke="#9a9c9e"/></svg>
<div class="m" style="left:366px;top:740px">Database</div>
<svg style="left:517px;top:746px" width="7" height="10"><path d="M3.500 0L6.500 3.500h-6zM3.500 10L.5 6.500h6z" fill="#afb1b3"/></svg>
<div class="n" style="top:763px;background:#36393b">1</div><div class="r" style="top:763px"></div><div class="m" style="left:346px;top:765px">information_schema</div>
<div class="n" style="top:786px;background:#36393b">2</div><div class="r" style="top:786px"></div><div class="m" style="left:346px;top:788px">db</div>
<div class="n" style="top:809px;background:#36393b">3</div><div class="r" style="top:809px"></div><div class="m" style="left:346px;top:811px">db1</div>
<div class="n" style="top:832px;background:#36393b">4</div><div class="r" style="top:832px"></div><div class="m" style="left:346px;top:834px">db2</div>
<div class="n" style="top:855px;background:#36393b">5</div><div class="r" style="top:855px"></div><div class="m" style="left:346px;top:857px">db3</div>
<div class="n" style="top:878px;background:#36393b">6</div><div class="r" style="top:878px"></div><div class="m" style="left:346px;top:880px">mysql</div>
<div class="n" style="top:901px;background:#36393b">7</div><div class="r" style="top:901px"></div><div class="m" style="left:346px;top:903px">performance_schema</div>
<div class="n" style="top:924px;background:#36393b">8</div><div class="r" style="top:924px"></div><div class="m" style="left:346px;top:926px">test</div>
<div style="left:531px;top:739px;width:1px;height:208px;background:#323232"></div>

<!-- bottom bars -->
<div style="left:1px;top:996px;width:961px;height:1px;background:#323232"></div>
<div style="left:1px;top:1018px;width:961px;height:1px;background:#323232"></div>
<div style="left:0;top:1039px;width:962px;height:1px;background:#2b2b2b"></div>
<svg style="left:33px;top:1003px" width="9" height="11"><path d="M0 0l9 5.500L0 11z" fill="#9a9c9e"/></svg>
<div class="t" style="left:48px;top:999px;font-size:11.500px">Run</div>
<svg style="left:90px;top:1003px" width="11" height="10"><path d="M0 0h2v2H0zM0 4h2v2H0zM0 8h2v2H0zM3.500 0H11v2H3.500zM3.500 4H11v2H3.500zM3.500 8H11v2H3.500z" fill="#afb1b3"/></svg>
<div class="t" style="left:105px;top:999px;font-size:11.500px">TODO</div>
<svg style="left:158px;top:1002px" width="11" height="11"><circle cx="5.500" cy="5.500" r="5.500" fill="#afb1b3"/><path d="M4.700 2h1.600v4.500H4.700zM4.700 7.500h1.600V9H4.700z" fill="#3c3f41"/></svg>
<div class="t" style="left:174px;top:999px;font-size:11.500px">Problems</div>
<svg style="left:245px;top:1003px" width="11" height="11"><path d="M0 0h11v11H0z" fill="#afb1b3"/><path d="M2 2l3 2.500L2 7M5 8.500h4" fill="none" stroke="#3c3f41"/></svg>
<div class="t" style="left:261px;top:999px;font-size:11.500px">Terminal</div>
<svg style="left:329px;top:1003px" width="13" height="12"><path d="M6.500 0L13 3 6.500 6 0 3z" fill="#afb1b3"/><path d="M0 6l6.500 3L13 6M0 9l6.500 3L13 9" fill="none" stroke="#afb1b3" stroke-width="1.200"/></svg>
<div class="t" style="left:346px;top:999px;font-size:11.500px">Python Packages</div>
<svg style="left:462px;top:1003px" width="11" height="11"><path d="M3 5V2c0-2 5-2 5 0v2H4v1h6c1 0 1 3 0 3H8V6H3zM0 3.500h2.500V6H0zM3 9h5v1c0 1.500-5 1.500-5 0z" fill="#afb1b3"/></svg>
<div class="t" style="left:478px;top:999px;font-size:11.500px">Python Console</div>
<div style="left:573px;top:997px;width:79px;height:21px;background:#2f3133"></div>
<svg style="left:584px;top:1002px" width="13" height="12"><path d="M3 0h7l3 6-3 6H3L0 6z" fill="#afb1b3"/><path d="M5 3l4 3-4 3z" fill="#2f3133"/></svg>
<div class="t" style="left:601px;top:999px;font-size:11.500px;color:#dcdcdc">Services</div>
<div style="left:858px;top:1002px;width:13px;height:13px;border-radius:7px;background:#499c54;color:#fff;font-size:9.500px;line-height:13px;text-align:center;font-weight:bold">2</div>
<div class="t" style="left:875px;top:999px;font-size:11.500px">Event Log</div>

<svg style="left:7px;top:1021px" width="12" height="13"><path d="M2.500 2.500h9v10h-9zM.5 10V.5h9" fill="none" stroke="#9a9c9e"/></svg>
<div class="t" style="left:28px;top:1019px;font-size:12.500px;color:#a0a2a4">Connected (2 minutes ago)</div>
<div class="t" style="left:685px;top:1019px;font-size:12.500px">2:1</div>
<div class="t" style="left:714px;top:1019px;font-size:12.500px">CRLF</div>
<div class="t" style="left:754px;top:1019px;font-size:12.500px">UTF-8</div>
<div class="t" style="left:800px;top:1019px;font-size:12.500px">4 spaces</div>
<div class="t" style="left:863px;top:1019px;font-size:12.500px">Python 3.6</div>
<svg style="left:934px;top:1023px" width="12" height="11"><path d="M1 5V2.500c0-2 4-2 4 0V4" fill="none" stroke="#afb1b3" stroke-width="1.200"/><path d="M4 5h8v6H4z" fill="#afb1b3"/></svg>

<!-- annotations -->
<div class="box" style="left:225px;top:81px;width:37px;height:36px"></div>
<div class="red" style="left:169px;top:120px">执行选项</div>
<div class="red" style="left:785px;top:146px">选择数据库范围</div>
<div class="box" style="left:298px;top:666px;width:367px;height:314px"></div>
<div class="red" style="left:544px;top:786px">结果展示</div>
</body></html>
